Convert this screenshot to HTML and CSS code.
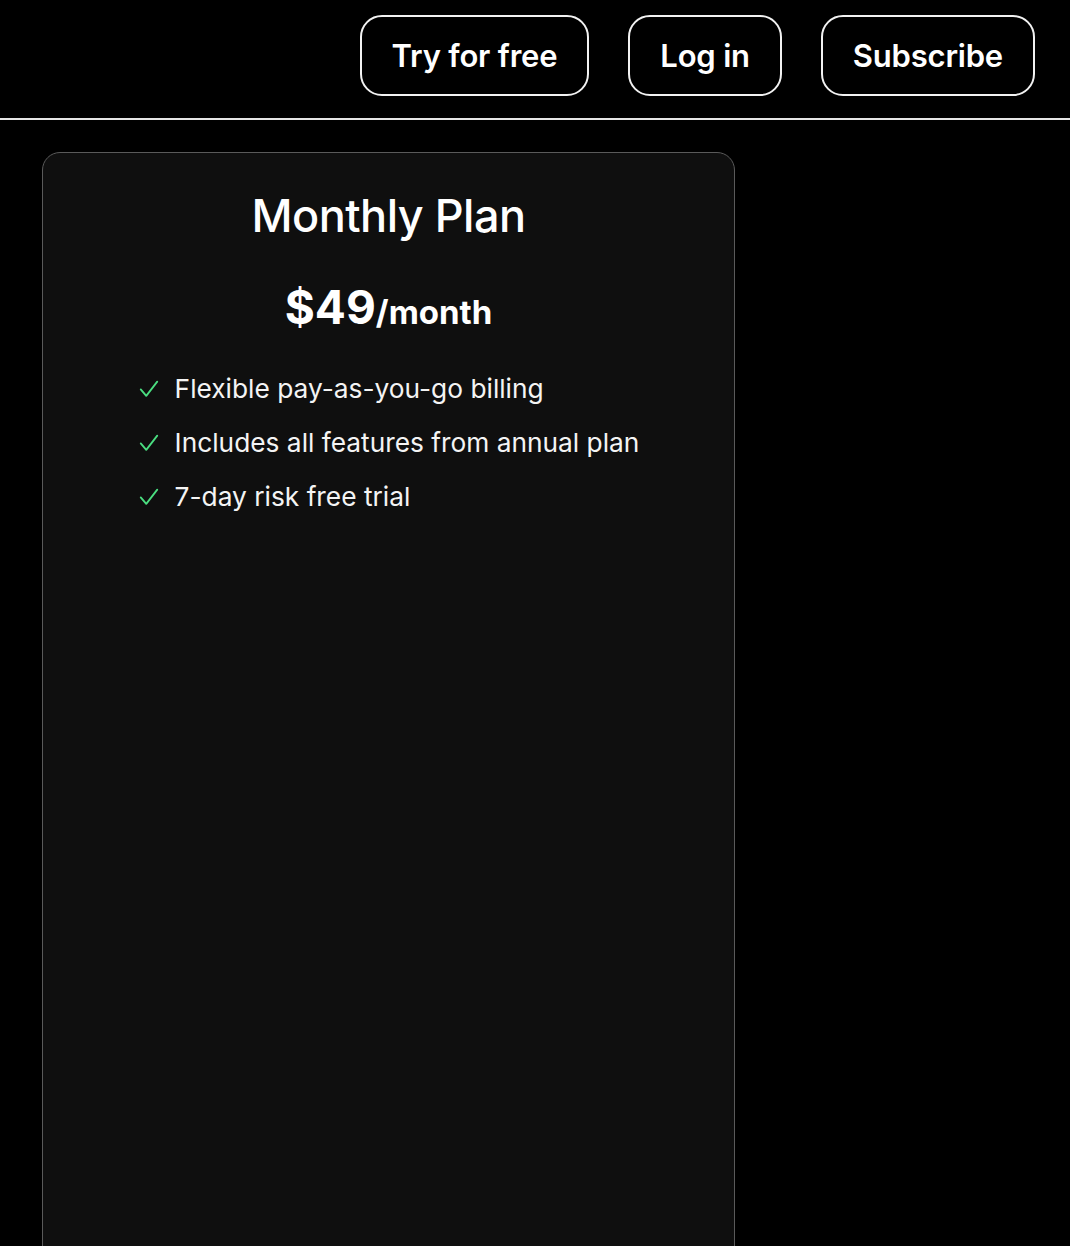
FILE: index.html
```html
<!DOCTYPE html>
<html lang="en">

<head>
    <meta charset="utf-8">
    <meta name="viewport" content="width=device-width, initial-scale=1.0">
    <title>Pricing</title>
    <link rel="stylesheet" href="styles.css">
</head>

<body>
    <header class="topbar">
        <nav class="actions">
            <a class="btn" href="#">Try for free</a>
            <a class="btn" href="#">Log in</a>
            <a class="btn" href="#">Subscribe</a>
        </nav>
    </header>

    <main class="plans">
        <section class="plan">
            <h2 class="plan-title">Monthly Plan</h2>
            <p class="plan-price"><span class="amount">$49</span><span class="period">/month</span></p>
            <ul class="features">
                <li><svg class="check" viewBox="0 0 24 24"><path d="M3 12.5l6 7L21 4" /></svg>Flexible pay-as-you-go billing</li>
                <li><svg class="check" viewBox="0 0 24 24"><path d="M3 12.5l6 7L21 4" /></svg>Includes all features from annual plan</li>
                <li><svg class="check" viewBox="0 0 24 24"><path d="M3 12.5l6 7L21 4" /></svg>7-day risk free trial</li>
            </ul>
        </section>
    </main>
</body>

</html>
```
FILE: styles.css
```css
html, body {
    margin: 0;
    padding: 0;
    background: #000;
    color: #fff;
    font-family: Inter, "Noto Sans", sans-serif;
}

.topbar {
    height: 118px;
    border-bottom: 2px solid #e6e6e6;
    display: flex;
    justify-content: flex-end;
    align-items: flex-start;
}

.actions {
    display: flex;
    gap: 39px;
    padding: 15px 35px 0 0;
}

.btn {
    display: flex;
    align-items: center;
    justify-content: center;
    height: 77px;
    padding: 0 30px;
    border: 2px solid #f2f2f2;
    border-radius: 22px;
    color: #fff;
    text-decoration: none;
    font-size: 31px;
    font-weight: 600;
    letter-spacing: -0.2px;
}

.plans {
    padding: 32px 0 0 42px;
}

.plan {
    width: 691px;
    min-height: 1200px;
    background: #0f0f0f;
    border: 1px solid #5a5a5a;
    border-radius: 18px;
    text-align: center;
}

.plan-title {
    margin: 35px 0 0;
    font-size: 45px;
    font-weight: 500;
    letter-spacing: -0.5px;
}

.plan-price {
    margin: 36px 0 0;
    font-weight: 700;
}

.plan-price .amount {
    font-size: 46px;
}

.plan-price .period {
    font-size: 33px;
}

.features {
    display: inline-flex;
    flex-direction: column;
    gap: 19px;
    list-style: none;
    margin: 36px 0 0;
    padding: 0;
    text-align: left;
}

.features li {
    display: flex;
    align-items: center;
    font-size: 26.3px;
    line-height: 35px;
    color: #f4f4f4;
}

.check {
    width: 22px;
    height: 22px;
    margin-right: 15px;
    fill: none;
    stroke: #4ade80;
    stroke-width: 2;
    stroke-linecap: round;
    stroke-linejoin: round;
}
```
